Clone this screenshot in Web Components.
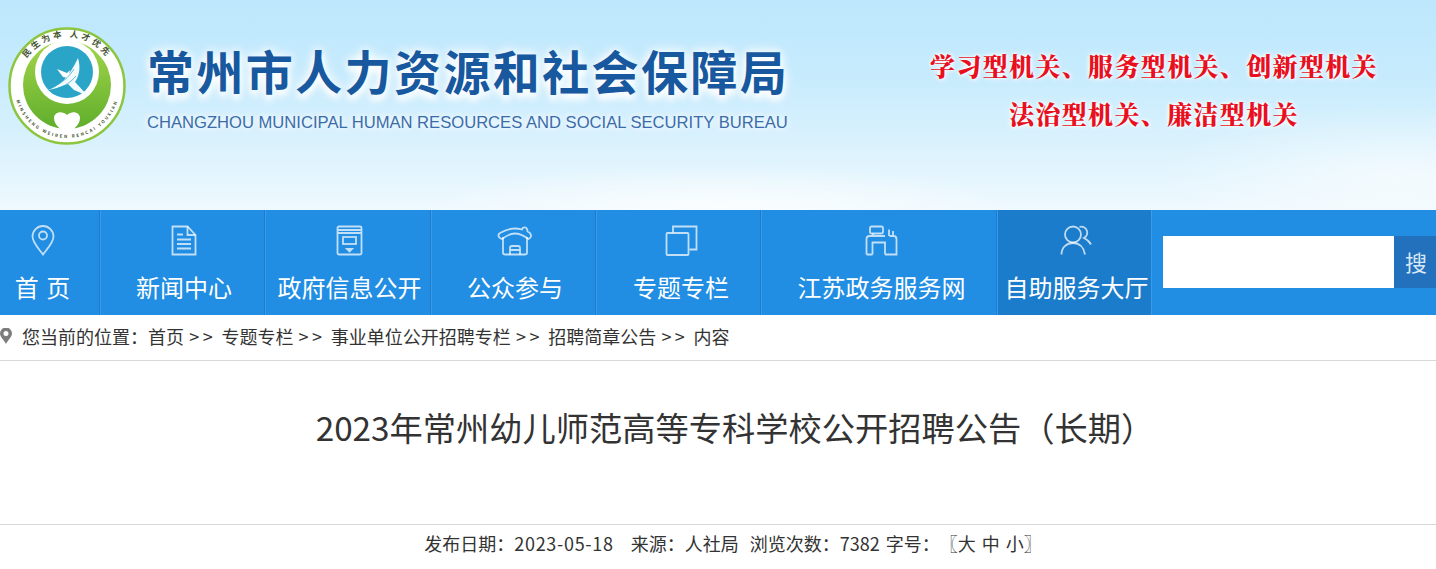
<!DOCTYPE html>
<html lang="zh-CN">
<head>
<meta charset="utf-8">
<title>2023年常州幼儿师范高等专科学校公开招聘公告（长期）</title>
<style>
  html, body { margin: 0; padding: 0; overflow: hidden; background: #fff; }
  body { width: 1470px; font-family: "Noto Sans CJK SC", "Noto Sans", sans-serif; color: #333; }
</style>
</head>
<body>
<site-header></site-header>
<nav-bar>
  <nav-item w="101" pad="15" left="0" label="首&nbsp;页">
    <svg slot="icon" width="24" height="31" viewBox="0 0 24 31"><path d="M12 29.5C8 24 1.500 17.500 1.500 11.500a10.500 10.500 0 0 1 21 0C22.500 17.500 16 24 12 29.500z"/><circle cx="12" cy="10.500" r="4"/></svg>
  </nav-item>
  <nav-item w="165" label="新闻中心">
    <svg slot="icon" width="26" height="31" viewBox="0 0 26 31"><path d="M1.500 1.500h15l8 8.500v19.500h-23z"/><path d="M16.500 1.500v8.500h8M6 9.500h6M6 14.500h14M6 19h14M6 23.500h14"/></svg>
  </nav-item>
  <nav-item w="166" label="政府信息公开">
    <svg slot="icon" width="27" height="31" viewBox="0 0 27 31"><path d="M3 1.500h21a1.500 1.500 0 0 1 1.500 1.500v25a1.500 1.500 0 0 1-1.500 1.500H3A1.500 1.500 0 0 1 1.500 28V3A1.500 1.500 0 0 1 3 1.500zM1.500 5h24M1.500 8h24"/><rect x="7" y="12" width="13" height="7"/><path d="M11 24h5l-2.500 2.500z"/></svg>
  </nav-item>
  <nav-item w="165" label="公众参与">
    <svg slot="icon" width="36" height="31" viewBox="0 0 36 31"><path d="M6 12v15.500a2 2 0 0 0 2 2h20a2 2 0 0 0 2-2V12"/><path d="M5 14C1 13 0 9 4 7.500 9 5 14 3.500 18 3.500c3 0 5 .5 7 1 .5-2.500 4-3 5-.5.500 1 .5 2 .5 2.500 4 1.500 5 5.500 1 7.500-4-3-9-5.500-14-5.500S9 11 5 14z"/><path d="M13 29.500V23a2 2 0 0 1 2-2h6a2 2 0 0 1 2 2v6.500M13 25h10"/></svg>
  </nav-item>
  <nav-item w="165" left="4" label="专题专栏">
    <svg slot="icon" width="33" height="31" viewBox="0 0 33 31"><rect x="1.500" y="8" width="22" height="22" rx="1"/><path d="M8 7.500V1.500h23.500v23h-7"/></svg>
  </nav-item>
  <nav-item w="236" left="4" label="江苏政务服务网">
    <svg slot="icon" width="33" height="31" viewBox="0 0 33 31"><rect x="5" y="1.500" width="13" height="7" rx="1.500"/><path d="M1.500 29.500V14a3 3 0 0 1 3-3h15.500M8 8.500V11M7.500 29.500V17.500h12.500v12M1.500 29.500h6M20 29.500h11.500V14a3 3 0 0 0-3-3h-4M24 11V4.500M28 11V6"/></svg>
  </nav-item>
  <nav-item w="154" left="4" active label="自助服务大厅">
    <svg slot="icon" width="33" height="31" viewBox="0 0 33 31"><circle cx="13" cy="9.500" r="8"/><path d="M1.500 29.500c0-7 5-11.500 11.500-11.500s11 4.500 12 11.500M19.500 2c3-1 6.500.5 7.500 4 .8 3-.5 5.500-3 7 3 1.500 5.500 3.500 7 6.500"/></svg>
  </nav-item>
  <search-box></search-box>
</nav-bar>
<bread-crumb>
  <a>首页</a><a>专题专栏</a><a>事业单位公开招聘专栏</a><a>招聘简章公告</a><a>内容</a>
</bread-crumb>
<article-head title="2023年常州幼儿师范高等专科学校公开招聘公告（长期）"></article-head>
<article-meta></article-meta>

<script>
// banner: sky background, logo, site name and slogan
class SiteHeader extends HTMLElement {
  constructor() {
    super();
    this.attachShadow({ mode: 'open' });
    this.shadowRoot.innerHTML = `
      <style>
        :host {
          display: flex;
          height: 210px;
          box-sizing: border-box;
          padding: 27px 0 0 8px;
          background:
            radial-gradient(ellipse 240px 70px at 1400px 175px, rgba(255,255,255,.55), rgba(255,255,255,0)),
            radial-gradient(ellipse 300px 40px at 720px 205px, rgba(255,255,255,.7), rgba(255,255,255,0)),
            linear-gradient(180deg, #bde7fd 0%, #c6ebfd 35%, #d8f1fd 65%, #eff9fe 100%);
        }
        .name { margin: 14px 0 0 21px; width: 660px; }
        h1 {
          margin: 0;
          font: 700 47px/58px "Noto Sans CJK SC", sans-serif;
          letter-spacing: 2.400px;
          color: #17589f;
          white-space: nowrap;
          text-shadow: 0 0 8px #fff, 0 0 14px #fff, 0 6px 6px rgba(255,255,255,.9);
        }
        p {
          margin: 14px 0 0 0;
          font: 16.600px/20px "Liberation Sans", Arial, sans-serif;
          color: #3b6ca9;
          white-space: nowrap;
          text-shadow: 0 0 6px #fff, 0 0 10px #fff;
        }
        .motto {
          margin: 14px 0 0 117px;
          width: 460px;
          text-align: center;
          font: 900 25px/48px "Noto Serif CJK SC", "Noto Sans CJK SC", serif;
          letter-spacing: 1.350px;
          color: #e8101f;
          white-space: nowrap;
          text-shadow: 0 0 2px #fff, 0 0 4px #fff, 0 0 6px #fff;
        }
      </style>
      <cz-logo></cz-logo>
      <div class="name">
        <h1>常州市人力资源和社会保障局</h1>
        <p>CHANGZHOU MUNICIPAL HUMAN RESOURCES AND SOCIAL SECURITY BUREAU</p>
      </div>
      <div class="motto">学习型机关、服务型机关、创新型机关<br>法治型机关、廉洁型机关</div>
    `;
  }
}

class CzLogo extends HTMLElement {
  constructor() {
    super();
    this.attachShadow({ mode: 'open' });
    this.shadowRoot.innerHTML = `
      <style>
        :host { display: block; width: 118px; height: 118px; flex: none; }
        svg { display: block; }
        text { font-family: "Noto Sans CJK SC", sans-serif; fill: #45552f; text-anchor: middle; }
      </style>
      <svg width="118" height="118" viewBox="0 0 118 118">
        <defs>
          <path id="top" d="M10 59a49 49 0 0 1 98 0"/>
          <path id="bot" d="M6 58a53 53 0 0 0 106 0"/>
          <linearGradient id="g" x1="0" y1="0" x2="0" y2="1">
            <stop offset="0" stop-color="#a5d54a"/><stop offset="1" stop-color="#5fae2c"/>
          </linearGradient>
          <clipPath id="disc"><circle cx="59" cy="58" r="44"/></clipPath>
        </defs>
        <circle cx="59" cy="59" r="57.500" fill="#fff" stroke="#8cc63f" stroke-width="2.500"/>
        <g clip-path="url(#disc)">
          <rect x="15" y="14" width="88" height="88" fill="url(#g)"/>
          <path d="M10 38L19 37 40 14H78L99 37 108 38V5H10z" fill="#fff"/>
        </g>
        <circle cx="59" cy="45" r="32" fill="#fff"/>
        <circle cx="59" cy="45" r="26" fill="#2aa5c8"/>
        <path d="M37 64C52 60 61 50 70 31c3 10 1 18-3 24l13 14-14-6-6-6c-7 3-15 5-23 7z" fill="#fff" opacity=".94"/>
        <path d="M49 42l10 4 3-3-2 8-5-1z" fill="#fff"/>
        <path d="M46 59c8-3 15-9 20-17M50 61c7-2 13-6 18-12" fill="none" stroke="#2aa5c8" stroke-width=".7"/>
        <path d="M59 112c-3-10-13-12-13-21 0-6 8-8 13-3 5-5 13-3 13 3 0 9-10 11-13 21z" fill="#fff"/>
        <text font-size="8.500" font-weight="700" letter-spacing="2.800"><textPath href="#top" startOffset="50%">民生为本 人才优先</textPath></text>
        <text font-size="4.300" font-weight="700" letter-spacing="1.900"><textPath href="#bot" startOffset="50%">MINSHENG WEIBEN RENCAI YOUXIAN</textPath></text>
      </svg>
    `;
  }
}

// blue menu strip
class NavBar extends HTMLElement {
  constructor() {
    super();
    this.attachShadow({ mode: 'open' });
    this.shadowRoot.innerHTML = `
      <style>
        :host { display: flex; height: 105px; background: #218de3; }
      </style>
      <slot></slot>
    `;
  }
}

class NavItem extends HTMLElement {
  constructor() {
    super();
    this.attachShadow({ mode: 'open' });
    const w = this.getAttribute('w');
    const pad = this.getAttribute('pad') || 0;
    const left = this.getAttribute('left') || 2;
    this.shadowRoot.innerHTML = `
      <style>
        :host {
          display: flex;
          flex-direction: column;
          align-items: center;
          flex: none;
          box-sizing: border-box;
          width: ${w}px;
          padding: 15px ${pad}px 0 ${left}px;
          border-right: 1px solid #3a9bea;
          box-shadow: inset -1px 0 0 #1a7dd0;
          color: #fff;
          font-size: 24px;
        }
        :host([active]) { background: #1b7ccb; }
        ::slotted(svg) {
          display: block;
          fill: none;
          stroke: rgba(255,255,255,.72);
          stroke-width: 1.800;
        }
        .ico { height: 31px; }
        .txt { margin-top: 13px; line-height: 36px; white-space: nowrap; word-spacing: 2px; }
      </style>
      <div class="ico"><slot name="icon"></slot></div>
      <div class="txt">${this.getAttribute('label')}</div>
    `;
  }
}

class SearchBox extends HTMLElement {
  constructor() {
    super();
    this.attachShadow({ mode: 'open' });
    this.shadowRoot.innerHTML = `
      <style>
        :host { display: flex; flex: none; height: 52px; margin: 26px 0 0 11px; }
        .input { width: 231px; background: #fff; }
        .btn {
          width: 76px;
          box-sizing: border-box;
          padding-left: 11px;
          background: #2371bd;
          color: #d9e8f6;
          font-size: 22px;
          line-height: 50px;
        }
      </style>
      <div class="input"></div>
      <div class="btn">搜</div>
    `;
  }
}

// current position strip, the ">>" is put between the passed links
class BreadCrumb extends HTMLElement {
  constructor() {
    super();
    this.attachShadow({ mode: 'open' });
    const parts = [...this.querySelectorAll('a')].map(a => a.textContent);
    const row = parts.map(p => `<span>${p}</span>`).join('<i>&gt;&gt;</i>');
    this.shadowRoot.innerHTML = `
      <style>
        :host {
          display: flex;
          align-items: center;
          height: 46px;
          box-sizing: border-box;
          padding-bottom: 3px;
          border-bottom: 1px solid #d8d8d8;
          font-size: 18px;
          color: #333;
          white-space: nowrap;
        }
        svg { flex: none; margin-right: 10px; }
        i { font-style: normal; width: 37.400px; text-align: center; letter-spacing: 3.500px; }
      </style>
      <svg width="12" height="16" viewBox="0 0 12 16"><path fill-rule="evenodd" fill="#7d7d7d" d="M6 16C4 12 0 9 0 5.500a6 6 0 0 1 12 0C12 9 8 12 6 16zM6 3a2.500 2.500 0 1 0 0 5 2.500 2.500 0 0 0 0-5z"/></svg>
      <span>您当前的位置：</span>${row}
    `;
  }
}

class ArticleHead extends HTMLElement {
  constructor() {
    super();
    this.attachShadow({ mode: 'open' });
    this.shadowRoot.innerHTML = `
      <style>
        :host {
          display: block;
          height: 164px;
          box-sizing: border-box;
          padding-top: 41px;
          border-bottom: 1px solid #d8d8d8;
          text-align: center;
          font-size: 33.250px;
          line-height: 50px;
          color: #333;
        }
      </style>
      ${this.getAttribute('title')}
    `;
  }
}

class ArticleMeta extends HTMLElement {
  constructor() {
    super();
    this.attachShadow({ mode: 'open' });
    this.shadowRoot.innerHTML = `
      <style>
        :host {
          display: flex;
          justify-content: center;
          height: 40px;
          font-size: 18px;
          line-height: 36px;
          color: #333;
          white-space: nowrap;
        }
        .date { letter-spacing: .700px; }
        .src { margin-left: 17px; }
        .views { margin-left: 11px; }
        .size { margin-left: 6px; }
        .zoom { word-spacing: 2px; margin-right: 4px; }
      </style>
      <span>发布日期：<span class="date">2023-05-18</span></span>
      <span class="src">来源：人社局</span>
      <span class="views">浏览次数：7382</span>
      <span class="size">字号：</span>
      <span class="zoom">〖大 中 小〗</span>
    `;
  }
}

customElements.define('site-header', SiteHeader);
customElements.define('cz-logo', CzLogo);
customElements.define('nav-bar', NavBar);
customElements.define('nav-item', NavItem);
customElements.define('search-box', SearchBox);
customElements.define('bread-crumb', BreadCrumb);
customElements.define('article-head', ArticleHead);
customElements.define('article-meta', ArticleMeta);
</script>
</body>
</html>
